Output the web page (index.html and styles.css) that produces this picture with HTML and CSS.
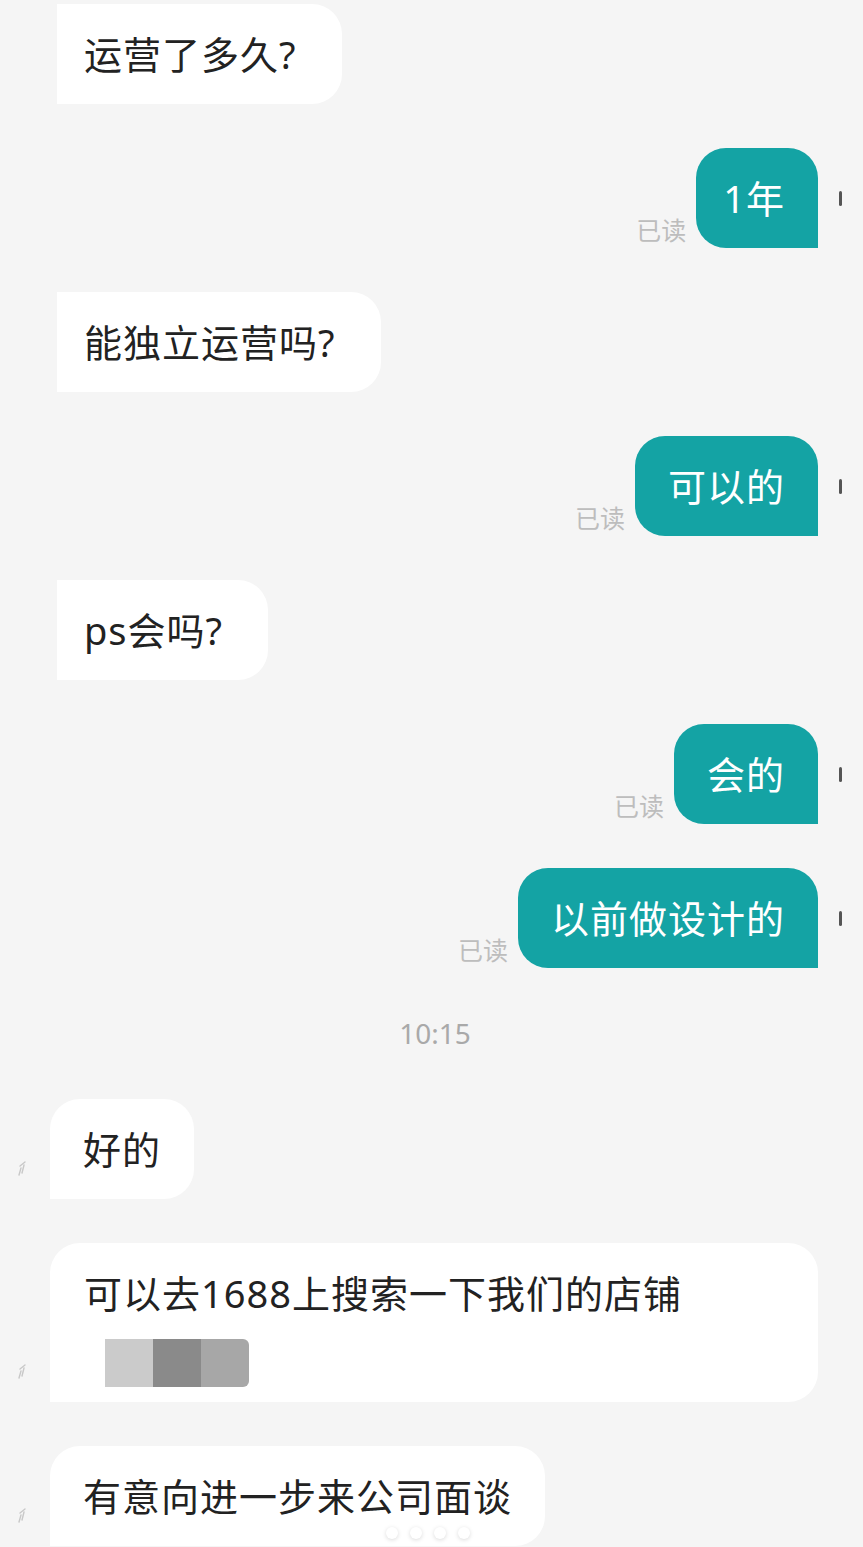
FILE: index.html
```html
<!DOCTYPE html>
<html lang="zh-CN">

<head>
    <meta charset="UTF-8" />
    <meta name="viewport" content="width=device-width, initial-scale=1.0" />
    <title>聊天</title>
    <link rel="stylesheet" href="styles.css">
</head>

<body>

    <div class="chat">
        <div class="row left">
            <div class="bubble in cut">运营了多久?</div>
        </div>

        <div class="row right">
            <span class="read">已读</span>
            <div class="bubble out short">1年</div>
            <span class="edge"></span>
        </div>

        <div class="row left">
            <div class="bubble in cut">能独立运营吗?</div>
        </div>

        <div class="row right">
            <span class="read">已读</span>
            <div class="bubble out">可以的</div>
            <span class="edge"></span>
        </div>

        <div class="row left">
            <div class="bubble in cut">ps会吗?</div>
        </div>

        <div class="row right">
            <span class="read">已读</span>
            <div class="bubble out">会的</div>
            <span class="edge"></span>
        </div>

        <div class="row right">
            <span class="read">已读</span>
            <div class="bubble out">以前做设计的</div>
            <span class="edge"></span>
        </div>

        <div class="time">10:15</div>

        <div class="row left with-icon">
            <svg class="status" width="10" height="18" viewBox="0 0 10 18">
                <path d="M2 16 L4 9 M5 14 L7 6 M3 7 L8 3" stroke="#c8c8c8" stroke-width="1.4" fill="none" stroke-linecap="round" />
            </svg>
            <div class="bubble in">好的</div>
        </div>

        <div class="row left with-icon">
            <svg class="status" width="10" height="18" viewBox="0 0 10 18">
                <path d="M2 16 L4 9 M5 14 L7 6 M3 7 L8 3" stroke="#c8c8c8" stroke-width="1.4" fill="none" stroke-linecap="round" />
            </svg>
            <div class="bubble in wide">
                可以去1688上搜索一下我们的店铺
                <div class="hidden-name">
                    <span class="blk b1"></span>
                    <span class="blk b2"></span>
                    <span class="blk b3"></span>
                </div>
            </div>
        </div>

        <div class="row left with-icon">
            <svg class="status" width="10" height="18" viewBox="0 0 10 18">
                <path d="M2 16 L4 9 M5 14 L7 6 M3 7 L8 3" stroke="#c8c8c8" stroke-width="1.4" fill="none" stroke-linecap="round" />
            </svg>
            <div class="bubble in">有意向进一步来公司面谈</div>
        </div>
    </div>

    <!-- page indicator dots -->
    <div class="dots">
        <span></span><span></span><span></span><span></span>
    </div>

</body>

</html>
```

FILE: styles.css
```css
html,
body {
    margin: 0;
    padding: 0;
}

body {
    font-family: "Noto Sans", "Noto Sans CJK SC", sans-serif;
    background-color: #f5f5f5;
    width: 863px;
    height: 1547px;
    overflow: hidden;
    position: relative;
}

.chat {
    display: flex;
    flex-direction: column;
    gap: 44px;
    padding-top: 4px;
}

.row {
    display: flex;
    align-items: flex-end;
}

.row.left {
    padding-left: 57px;
}

.row.right {
    justify-content: flex-end;
    padding-right: 21px;
}

.bubble {
    font-size: 38px;
    line-height: 50px;
    padding: 25px 33px;
    letter-spacing: 1px;
    white-space: nowrap;
}

.bubble.in {
    background-color: #ffffff;
    color: #222;
    border-radius: 30px 30px 30px 0;
}

.bubble.cut {
    border-radius: 0 30px 30px 0;
    padding-left: 27px;
    padding-right: 45px;
}

.bubble.out {
    background-color: #14a3a4;
    color: #ffffff;
    border-radius: 30px 30px 0 30px;
}

.bubble.out.short {
    padding-left: 27px;
}

.read {
    font-size: 25px;
    line-height: 30px;
    color: #bdbdbd;
    margin-right: 10px;
    margin-bottom: 3px;
}

.edge {
    width: 3px;
    height: 15px;
    background-color: #555;
    border-radius: 2px;
    margin-left: 21px;
    align-self: center;
}

.time {
    text-align: center;
    font-size: 28px;
    line-height: 43px;
    color: #a9a9a9;
    padding-left: 7px;
}

.row.with-icon {
    padding-left: 17px;
}

.status {
    margin-right: 23px;
    margin-bottom: 22px;
}

.bubble.wide {
    flex: 1;
    margin-right: 45px;
    padding: 25px 33px 15px 34px;
}

.hidden-name {
    display: flex;
    margin-top: 21px;
    margin-left: 21px;
    filter: blur(0.6px);
}

.blk {
    width: 48px;
    height: 48px;
}

.b1 {
    background-color: #cbcbcb;
}

.b2 {
    background-color: #8a8a8a;
}

.b3 {
    background-color: #a7a7a7;
    border-radius: 0 6px 6px 0;
}

.dots {
    position: absolute;
    left: 386px;
    bottom: 8px;
    display: flex;
    gap: 12px;
}

.dots span {
    width: 12px;
    height: 12px;
    border-radius: 50%;
    background-color: #ffffff;
    box-shadow: 0 1px 4px rgba(0, 0, 0, 0.15);
}
```
